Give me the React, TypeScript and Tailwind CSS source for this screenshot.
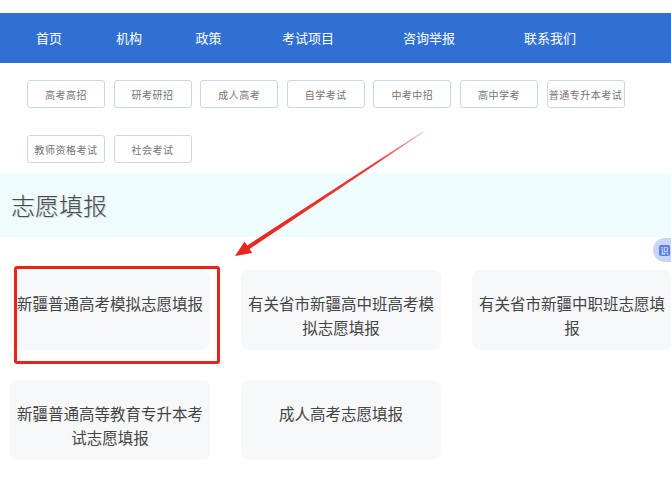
import React from "react";

const navItems: { label: string; w: string }[] = [
  { label: "首页", w: "w-[80px]" },
  { label: "机构", w: "w-[80px]" },
  { label: "政策", w: "w-[79px]" },
  { label: "考试项目", w: "w-[120px]" },
  { label: "咨询举报", w: "w-[122px]" },
  { label: "联系我们", w: "w-[120px]" },
];

const tagRows = [
  ["高考高招", "研考研招", "成人高考", "自学考试", "中考中招", "高中学考", "普通专升本考试"],
  ["教师资格考试", "社会考试"],
];

const cardRows = [
  ["新疆普通高考模拟志愿填报", "有关省市新疆高中班高考模拟志愿填报", "有关省市新疆中职班志愿填报"],
  ["新疆普通高等教育专升本考试志愿填报", "成人高考志愿填报"],
];

function Tag({ label }: { label: string }) {
  return (
    <div className="w-[78px] h-[28px] flex items-center justify-center rounded-[3px] border border-[#cdd6e3] bg-white text-[10px] text-[#747474] tracking-[0.5px]">
      {label}
    </div>
  );
}

function Card({ label }: { label: string }) {
  return (
    <div className="w-[200px] h-[80px] shrink-0 rounded-[8px] bg-[#f7f8fa] px-[7px] pt-[21px] text-center text-[15.5px] leading-[24px] text-[#444]">
      {label}
    </div>
  );
}

export default function App() {
  return (
    <div
      className="relative w-[671px] h-[500px] overflow-hidden bg-white"
      style={{ fontFamily: '"Noto Sans CJK SC", "Noto Sans", sans-serif' }}
    >
      <div className="h-[13px]" />
      <nav className="h-[50px] bg-[#3070d2] flex items-center pl-[9px]">
        {navItems.map((n) => (
          <div key={n.label} className={`${n.w} text-center text-[13px] text-white`}>
            {n.label}
          </div>
        ))}
      </nav>

      <div className="pl-[27px] pt-[17px] flex flex-col gap-y-[27px]">
        {tagRows.map((row, i) => (
          <div key={i} className="flex gap-x-[8.6px]">
            {row.map((t) => (
              <Tag key={t} label={t} />
            ))}
          </div>
        ))}
      </div>

      <div className="mt-[10px] h-[64px] bg-[#effcfe] flex items-center pl-[11px]">
        <h2 className="text-[24px] leading-none font-light text-[#4a4a4a] [text-shadow:1px_1px_1px_rgba(0,0,0,0.2)]">
          志愿填报
        </h2>
      </div>

      <div className="mt-[33px] pl-[10px] flex flex-col gap-y-[30px]">
        {cardRows.map((row, i) => (
          <div key={i} className="flex gap-x-[31px]">
            {row.map((c) => (
              <Card key={c} label={c} />
            ))}
          </div>
        ))}
      </div>

      {/* annotation: red highlight box */}
      <div className="absolute left-[14px] top-[266px] w-[206px] h-[98px] rounded-[3px] border-[3px] border-[#e6241d]" />

      {/* annotation: red arrow */}
      <svg className="absolute left-0 top-0 pointer-events-none" width="671" height="500">
        <defs>
          <linearGradient id="arrowFade" x1="423" y1="132" x2="235" y2="256" gradientUnits="userSpaceOnUse">
            <stop offset="0" stopColor="#e5261f" stopOpacity="0.25" />
            <stop offset="0.25" stopColor="#e5261f" stopOpacity="0.9" />
            <stop offset="1" stopColor="#e5261f" />
          </linearGradient>
        </defs>
        <polygon
          points="235,256 252.2,253 249.6,248.9 423.3,132.4 422.7,131.6 247.2,245.4 244.6,241.4"
          fill="url(#arrowFade)"
        />
      </svg>

      {/* floating side widget, cut off at the edge */}
      <div className="absolute left-[653px] top-[238px] w-[36px] h-[24px] rounded-full bg-[#c8d5f8] flex items-center pl-[6px]">
        <div className="w-[11px] h-[11px] rounded-[2px] bg-[#5b7fe0] text-[8px] leading-[11px] text-white text-center">
          识
        </div>
      </div>
    </div>
  );
}
